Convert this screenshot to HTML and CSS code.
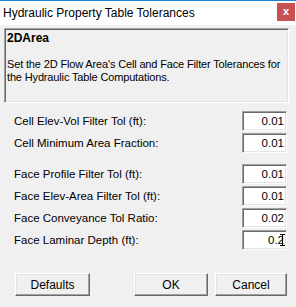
FILE: index.html
```html
<!DOCTYPE html>
<html lang="en">
<head>
  <meta charset="UTF-8">
  <title>Hydraulic Property Table Tolerances</title>
  <link rel="stylesheet" href="styles.css">
</head>
<body>
  <div class="titlebar">
    <span class="title">Hydraulic Property Table Tolerances</span>
    <span class="close">x</span>
  </div>

  <div class="desc">
    <div class="desc-head">2DArea</div>
    <div class="desc-text">Set the 2D Flow Area's Cell and Face Filter Tolerances for<br>the Hydraulic Table Computations.</div>
  </div>

  <div class="form">
    <div class="group">
      <div class="row">
        <span class="label">Cell Elev-Vol Filter Tol (ft):</span>
        <span class="field">0.01</span>
      </div>
      <div class="row">
        <span class="label">Cell Minimum Area Fraction:</span>
        <span class="field">0.01</span>
      </div>
    </div>

    <div class="group">
      <div class="row">
        <span class="label">Face Profile Filter Tol (ft):</span>
        <span class="field">0.01</span>
      </div>
      <div class="row">
        <span class="label">Face Elev-Area Filter Tol (ft):</span>
        <span class="field">0.01</span>
      </div>
      <div class="row">
        <span class="label">Face Conveyance Tol Ratio:</span>
        <span class="field">0.02</span>
      </div>
      <div class="row">
        <span class="label">Face Laminar Depth (ft):</span>
        <span class="field">0.2<span class="ibeam"></span></span>
      </div>
    </div>
  </div>

  <div class="buttons">
    <button class="btn btn-defaults">Defaults</button>
    <button class="btn btn-ok">OK</button>
    <button class="btn btn-cancel">Cancel</button>
  </div>
</body>
</html>
```

FILE: styles.css
```css
/* Base */
body {
  margin: 0;
  width: 296px;
  height: 307px;
  overflow: hidden;
  background-color: #f0f0f0;
  font-family: "Liberation Sans", Arial, sans-serif;
  font-size: 11px;
  color: #000;
}

/* Title bar */
.titlebar {
  height: 24px;
  border-top: 1px solid #1883d7;
  background-color: #fff;
  display: flex;
  justify-content: space-between;
  align-items: flex-start;
}

.title {
  font-size: 12px;
  line-height: 14px;
  padding: 5px 0 0 3px;
}

.close {
  width: 18px;
  height: 18px;
  margin: 2px 1px 0 0;
  background-color: #c75050;
  color: #fff;
  font-weight: bold;
  font-size: 11px;
  line-height: 16px;
  text-align: center;
}

/* Description box */
.desc {
  height: 70px;
  margin: 3px 7px 0 4px;
  padding: 3px 3px 0 1px;
  border: 1px solid;
  border-color: #a0a0a0 #fff #fff #a0a0a0;
  box-shadow: inset 1px 1px #696969, inset -1px -1px #e3e3e3;
  line-height: 13px;
}

.desc-head {
  font-weight: bold;
  font-size: 12px;
  padding-left: 1px;
  margin-bottom: 13px;
}

.desc-text {
  padding-left: 1px;
  white-space: nowrap;
  letter-spacing: -0.15px;
}

/* Form rows */
.form {
  padding: 7px 9px 0 14px;
}

.group + .group {
  margin-top: 9px;
}

.row {
  display: flex;
  justify-content: space-between;
  align-items: center;
  height: 22px;
}

.label {
  font-size: 11.5px;
}

.field {
  position: relative;
  box-sizing: border-box;
  width: 45px;
  height: 20px;
  padding-right: 2px;
  border: 1px solid;
  border-color: #a0a0a0 #fff #fff #a0a0a0;
  box-shadow: inset 1px 1px #696969, inset -1px -1px #e3e3e3;
  background-color: #fff;
  font-size: 11.5px;
  line-height: 18px;
  text-align: right;
}

/* mouse text cursor over the last field */
.ibeam {
  position: absolute;
  right: 3px;
  top: 3px;
  width: 1px;
  height: 12px;
  background-color: #000;
}

.ibeam::before,
.ibeam::after {
  content: "";
  position: absolute;
  left: -2px;
  width: 5px;
  height: 1px;
  background-color: #000;
}

.ibeam::before { top: 0; }
.ibeam::after { bottom: 0; }

/* Buttons */
.buttons {
  display: flex;
  padding: 22px 9px 0 15px;
}

.btn {
  box-sizing: border-box;
  height: 23px;
  padding: 0;
  border: 1px solid;
  border-color: #fff #696969 #696969 #fff;
  box-shadow: inset -1px -1px #a0a0a0, inset 1px 1px #e3e3e3;
  background-color: #f0f0f0;
  font-family: "Liberation Sans", Arial, sans-serif;
  font-size: 12px;
  color: #000;
}

.btn-defaults { width: 75px; }
.btn-ok { width: 74px; margin-left: auto; }
.btn-cancel { width: 72px; margin-left: 7px; }
```
